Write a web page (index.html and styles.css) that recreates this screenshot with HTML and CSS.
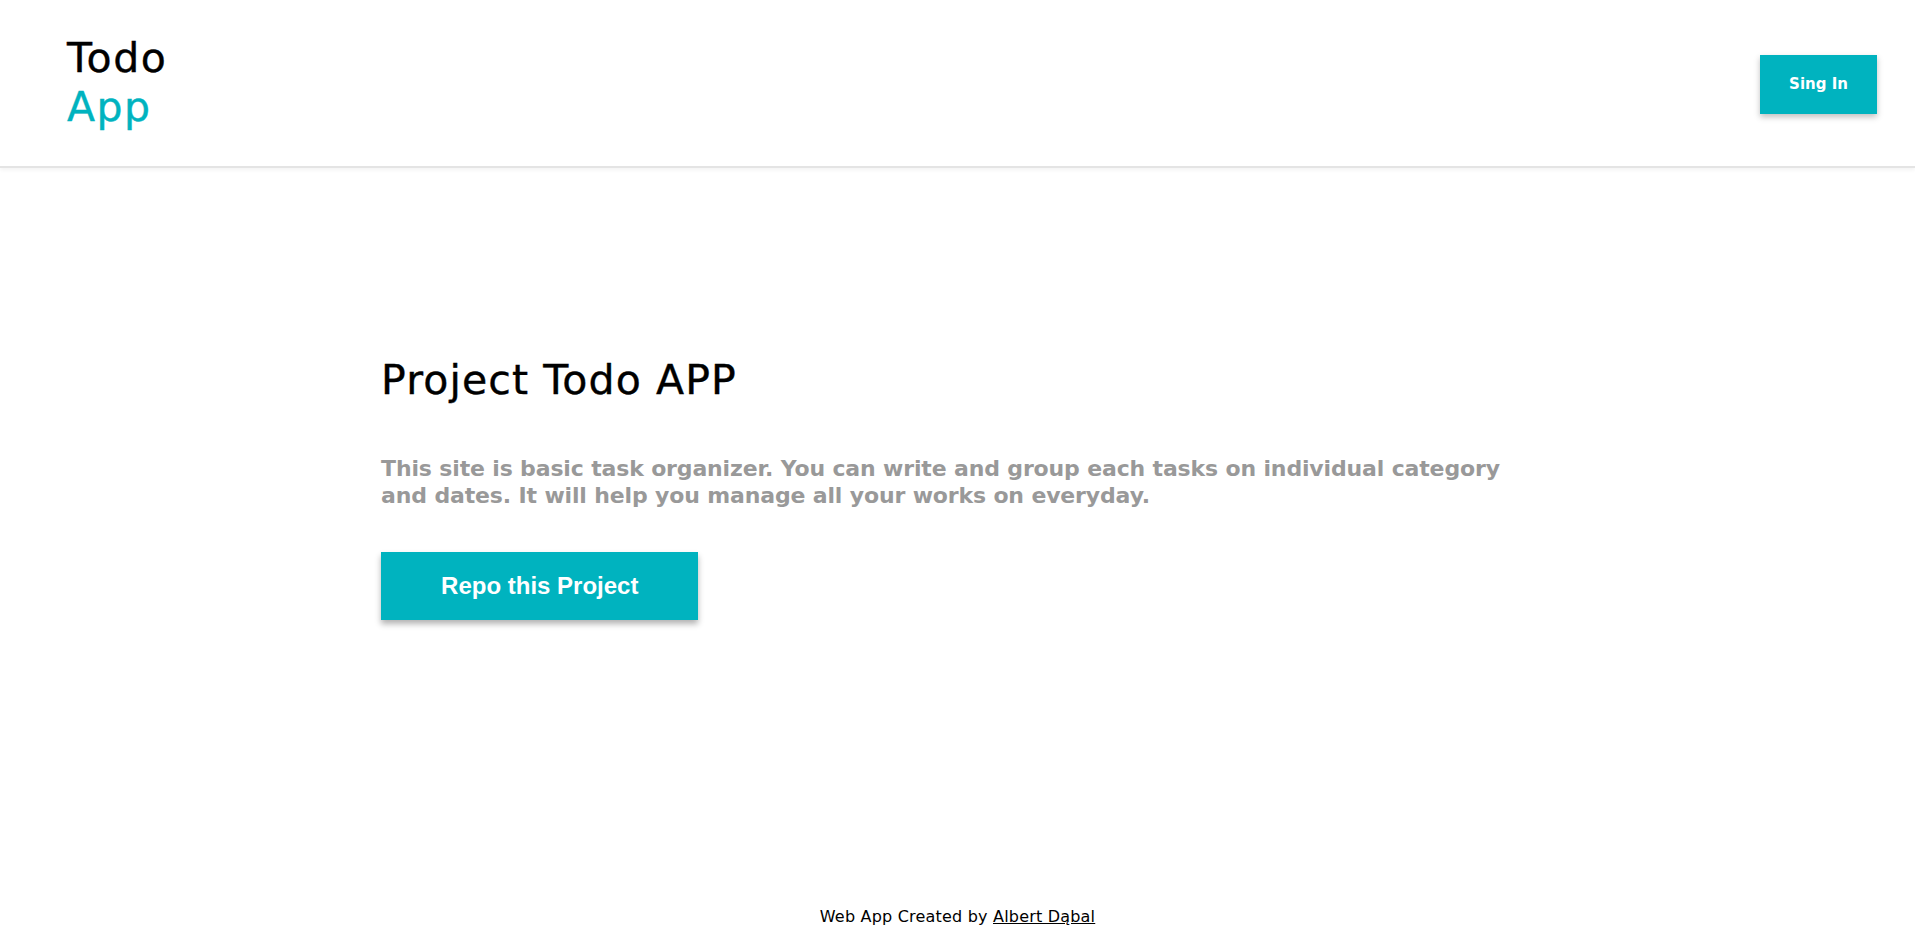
FILE: index.html
```html
<!DOCTYPE html>
<html lang="en">
<head>
<meta charset="utf-8">
<title>Todo App</title>
<link rel="stylesheet" href="styles.css">
</head>
<body>
<div class="page">
  <header class="header">
    <div class="logo">
      <span class="logo-line">Todo</span>
      <span class="logo-line logo-accent">App</span>
    </div>
    <button class="btn-signin" type="button">Sing In</button>
  </header>
  <main class="main">
    <section class="hero">
      <h1 class="hero-title">Project Todo APP</h1>
      <p class="hero-text">This site is basic task organizer. You can write and group each tasks on individual category and dates. It will help you manage all your works on everyday.</p>
      <button class="btn-repo" type="button">Repo this Project</button>
    </section>
  </main>
  <footer class="footer">
    Web App Created by <a class="footer-link" href="#">Albert Dąbal</a>
  </footer>
</div>
</body>
</html>
```
FILE: styles.css
```css
* { box-sizing: border-box; }
html, body { margin: 0; padding: 0; background: #fff; }
body {
  font-family: "DejaVu Sans", "Open Sans", sans-serif;
  color: #000;
}
.page {
  min-height: 100vh;
  display: flex;
  flex-direction: column;
}
.header {
  height: 168px;
  display: flex;
  justify-content: space-between;
  align-items: center;
  padding: 0 38px 0 67px;
  border-bottom: 2px solid #e4e4e4;
  box-shadow: 0 2px 4px rgba(0,0,0,0.05);
}
.logo {
  display: flex;
  flex-direction: column;
  font-size: 41px;
  line-height: 49px;
  font-weight: 400;
  letter-spacing: 1.5px;
  -webkit-text-stroke: 0.4px currentColor;
}
.logo-accent { color: #00b3bf; }
.btn-signin {
  width: 117px;
  height: 59px;
  background: #00b3bf;
  color: #fff;
  border: none;
  font-family: "DejaVu Sans", sans-serif;
  font-size: 15px;
  font-weight: 700;
  box-shadow: 0 3px 6px rgba(0,0,0,0.25);
  margin-top: 2px;
  cursor: pointer;
}
.main {
  flex: 1;
  padding-top: 188px;
}
.hero {
  width: 60.2%;
  margin: 0 auto;
}
.hero-title {
  margin: 0;
  font-size: 41px;
  line-height: 49px;
  font-weight: 400;
  letter-spacing: 1.1px;
  -webkit-text-stroke: 0.4px currentColor;
}
.hero-text {
  margin: 50px 0 0;
  font-size: 22px;
  line-height: 27px;
  font-weight: 700;
  letter-spacing: -0.15px;
  color: #999;
}
.btn-repo {
  margin-top: 43px;
  padding: 20px 60px;
  white-space: nowrap;
  background: #00b3bf;
  color: #fff;
  border: none;
  font-family: "Liberation Sans", Arial, sans-serif;
  font-size: 24px;
  line-height: 28px;
  font-weight: 700;
  box-shadow: 0 4px 6px rgba(0,0,0,0.3);
  cursor: pointer;
}
.footer {
  text-align: center;
  font-size: 16px;
  line-height: 18px;
  letter-spacing: 0.2px;
  padding-bottom: 7px;
}
.footer-link { color: #000; }
```
